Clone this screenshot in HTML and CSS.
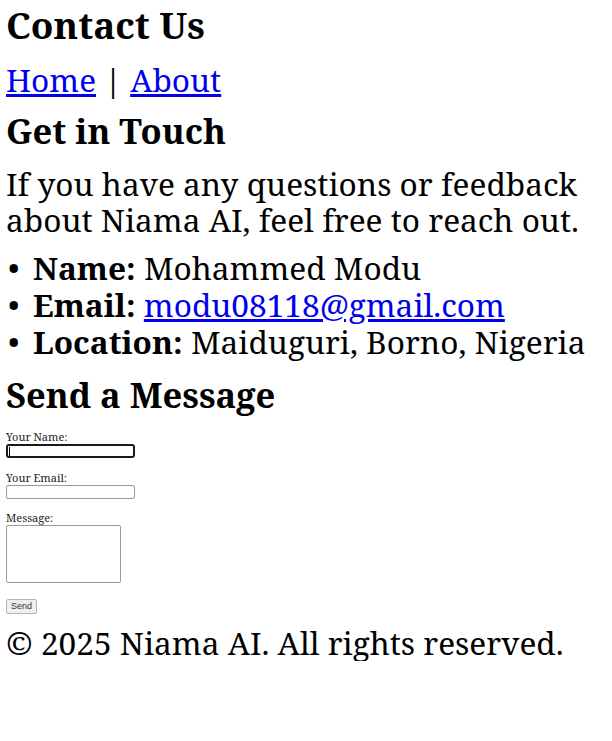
FILE: index.html
```html
<!DOCTYPE html>
<html lang="en">
<head>
<meta charset="utf-8">
<title>Contact Us - Niama AI</title>
<link rel="stylesheet" href="styles.css">
</head>
<body>
<header class="site-header">
  <h1 class="page-title">Contact Us</h1>
  <nav class="nav"><a href="#">Home</a> | <a href="#">About</a></nav>
</header>
<main>
  <section class="touch">
    <h2 class="section-title">Get in Touch</h2>
    <p class="intro">If you have any questions or feedback about Niama AI, feel free to reach out.</p>
    <ul class="details">
      <li><strong>Name:</strong> Mohammed Modu</li>
      <li><strong>Email:</strong> <a href="#">modu08118@gmail.com</a></li>
      <li><strong>Location:</strong> Maiduguri, Borno, Nigeria</li>
    </ul>
  </section>
  <section class="message">
    <h2 class="section-title">Send a Message</h2>
    <form class="form">
      <label class="label first" for="name">Your Name:</label>
      <input class="field focused" id="name" type="text">
      <label class="label" for="email">Your Email:</label>
      <input class="field" id="email" type="email">
      <label class="label" for="msg">Message:</label>
      <textarea class="area" id="msg"></textarea>
      <button class="send" type="button">Send</button>
    </form>
  </section>
</main>
<footer class="footer">
  <p>&copy; 2025 Niama AI. All rights reserved.</p>
</footer>
</body>
</html>
```
FILE: styles.css
```css
html, body {
  margin: 0;
  padding: 0;
  background: #fff;
}
body {
  padding: 0 6px;
  font-family: "Noto Serif", "DejaVu Serif", serif;
  color: #000;
}
a {
  color: #0000ee;
}
.page-title {
  margin: 0;
  padding-top: 2px;
  font-size: 37px;
  line-height: 46px;
  font-weight: 700;
}
.nav {
  margin-top: 8px;
  font-size: 31.6px;
  line-height: 48px;
}
.section-title {
  margin: 3px 0 0;
  font-size: 34.5px;
  line-height: 48px;
  font-weight: 700;
}
.intro {
  margin: 11px 0 0;
  font-size: 31.6px;
  line-height: 36px;
}
.details {
  margin: 11px 0 0;
  padding-left: 27px;
  list-style: none;
  font-size: 31.6px;
  line-height: 37px;
}
.details li::before {
  content: "\2022";
  display: inline-block;
  box-sizing: border-box;
  width: 27px;
  margin-left: -27px;
  padding-left: 2px;
}
.message .section-title {
  margin-top: 11px;
}
.form {
  display: flex;
  flex-direction: column;
  align-items: flex-start;
  font-size: 11px;
  color: #222;
}
.label {
  display: block;
  line-height: 14px;
  margin-top: 13px;
}
.label.first {
  margin-top: 11px;
}
.field {
  margin: 0;
  width: 129px;
  height: 14px;
  padding: 0;
  box-sizing: border-box;
  border: 1px solid #9a9a9a;
  border-radius: 2px;
  background: #fff;
}
.field.focused {
  border: 2px solid #1a1a1a;
  border-radius: 3px;
  background: linear-gradient(#000, #000) no-repeat 1px center / 1px 9px, #fff;
}
.area {
  margin: 0;
  width: 115px;
  height: 58px;
  padding: 0;
  box-sizing: border-box;
  border: 1px solid #9a9a9a;
  border-radius: 2px;
  resize: none;
  background: #fff;
}
.label[for="msg"] {
  margin-top: 12px;
}
.send {
  margin-top: 16px;
  width: 31px;
  height: 15px;
  padding: 0;
  font-family: "Liberation Sans", Arial, sans-serif;
  font-size: 9px;
  line-height: 13px;
  border: 1px solid #b5b5b5;
  border-radius: 2px;
  background: #efefef;
  color: #333;
}
.footer p {
  margin: 11px 0 0;
  font-size: 31.6px;
  line-height: 36px;
}
```
